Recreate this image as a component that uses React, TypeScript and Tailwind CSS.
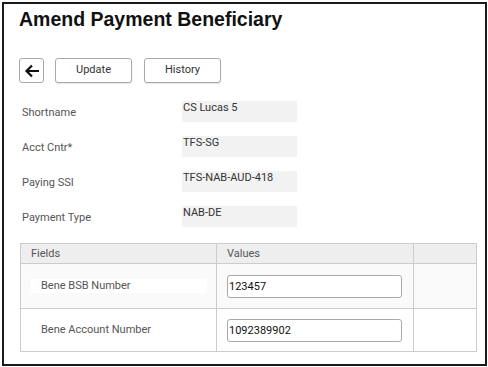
import React from "react";

const fields = [
  { label: "Shortname", value: "CS Lucas 5" },
  { label: "Acct Cntr*", value: "TFS-SG" },
  { label: "Paying SSI", value: "TFS-NAB-AUD-418" },
  { label: "Payment Type", value: "NAB-DE" },
];

const App = () => {
  return (
    <div className="w-[488px] h-[367px] bg-white pt-[2px] pl-[2px] font-['Roboto',sans-serif] text-[#333]">
      <div className="w-[485px] h-[364px] border-2 border-[#1a1a1a]">
        <p className="pl-[15px] pt-[3px] text-[19.5px] leading-[24px] font-bold text-[#111] font-['Liberation_Sans',Arial,sans-serif]">
          Amend Payment Beneficiary
        </p>
        <div className="flex items-center pl-[15px] mt-[27px] h-[25px]">
          <button className="w-[25px] h-[25px] flex items-center justify-center border border-[#aaa] rounded-[3px] bg-white">
            <svg width="16" height="14" viewBox="0 0 16 14">
              <path d="M15 7H2.5M8 1.5L2.5 7L8 12.5" fill="none" stroke="#111" strokeWidth="2.2" />
            </svg>
          </button>
          <button className="ml-[11px] w-[77px] h-[25px] border border-[#aaa] rounded-[3px] bg-white text-[11px] text-[#333] shadow-[0_1px_1px_rgba(0,0,0,0.1)]">
            Update
          </button>
          <button className="ml-[12px] w-[77px] h-[25px] border border-[#aaa] rounded-[3px] bg-white text-[11px] text-[#333] shadow-[0_1px_1px_rgba(0,0,0,0.1)]">
            History
          </button>
        </div>
        <div className="mt-[18px] flex flex-col gap-[14px]">
          {fields.map((f) => (
            <div key={f.label} className="flex h-[21px]">
              <div className="w-[178px] pl-[18px] pt-[4px] text-[11px] leading-[16px] text-[#555]">
                {f.label}
              </div>
              <div className="w-[115px] h-[21px] bg-[#f2f2f2] pl-[1px] text-[11px] leading-[14px] text-[#333]">
                {f.value}
              </div>
            </div>
          ))}
        </div>
        <div className="ml-[16px] mt-[16px] w-[457px] border border-[#ccc] text-[11px] text-[#555]">
          <div className="flex h-[20px] bg-[#eeeeee] border-b border-[#ccc]">
            <div className="w-[196px] pl-[10px] leading-[19px] border-r border-[#ccc]">Fields</div>
            <div className="w-[197px] pl-[10px] leading-[19px] border-r border-[#ccc]">Values</div>
            <div className="flex-1"></div>
          </div>
          <div className="flex h-[45px] bg-[#fafafa] border-b border-[#ccc]">
            <div className="w-[196px] flex items-center pl-[10px] border-r border-[#ccc]">
              <div className="w-[176px] h-[14px] bg-white leading-[14px] pl-[10px]">Bene BSB Number</div>
            </div>
            <div className="w-[197px] flex items-center pl-[10px] border-r border-[#ccc]">
              <div className="w-[175px] h-[23px] border border-[#aaa] rounded-[3px] bg-white pl-[1px] leading-[21px] text-[#111]">
                123457
              </div>
            </div>
            <div className="flex-1"></div>
          </div>
          <div className="flex h-[42px] bg-white">
            <div className="w-[196px] flex items-center pl-[20px] border-r border-[#ccc]">Bene Account Number</div>
            <div className="w-[197px] flex items-center pl-[10px] border-r border-[#ccc]">
              <div className="w-[175px] h-[23px] border border-[#aaa] rounded-[3px] bg-white pl-[1px] leading-[21px] text-[#111]">
                1092389902
              </div>
            </div>
            <div className="flex-1"></div>
          </div>
        </div>
      </div>
    </div>
  );
};

export default App;
